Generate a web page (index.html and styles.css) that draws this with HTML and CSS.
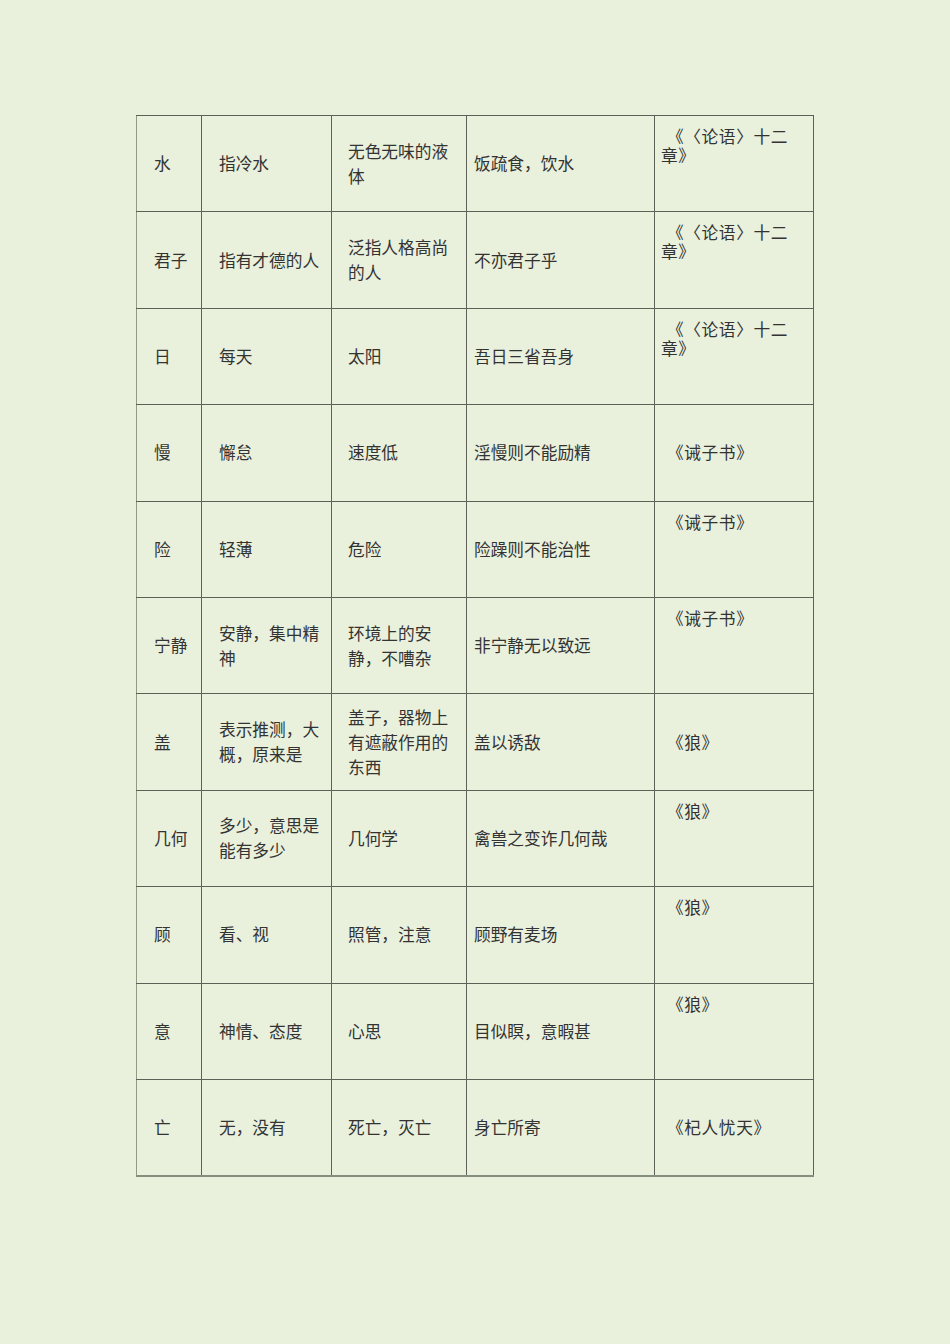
FILE: index.html
```html
<!DOCTYPE html>
<html lang="zh">
<head>
<meta charset="utf-8">
<title>文言词语</title>
<link rel="stylesheet" href="styles.css">
</head>
<body>
<table class="vocab">
  <colgroup>
    <col class="c1"><col class="c2"><col class="c3"><col class="c4"><col class="c5">
  </colgroup>
  <tbody>
    <tr><td class="word">水</td><td class="old">指冷水</td><td class="now">无色无味的液体</td><td class="ex">饭疏食，饮水</td><td class="src top">《〈论语〉十二章》</td></tr>
    <tr><td class="word">君子</td><td class="old">指有才德的人</td><td class="now">泛指人格高尚的人</td><td class="ex">不亦君子乎</td><td class="src top">《〈论语〉十二章》</td></tr>
    <tr><td class="word">日</td><td class="old">每天</td><td class="now">太阳</td><td class="ex">吾日三省吾身</td><td class="src top">《〈论语〉十二章》</td></tr>
    <tr><td class="word">慢</td><td class="old">懈怠</td><td class="now">速度低</td><td class="ex">淫慢则不能励精</td><td class="src mid">《诫子书》</td></tr>
    <tr><td class="word">险</td><td class="old">轻薄</td><td class="now">危险</td><td class="ex">险躁则不能治性</td><td class="src top">《诫子书》</td></tr>
    <tr><td class="word">宁静</td><td class="old">安静，集中精神</td><td class="now">环境上的安静，不嘈杂</td><td class="ex">非宁静无以致远</td><td class="src top">《诫子书》</td></tr>
    <tr><td class="word">盖</td><td class="old">表示推测，大概，原来是</td><td class="now">盖子，器物上有遮蔽作用的东西</td><td class="ex">盖以诱敌</td><td class="src mid">《狼》</td></tr>
    <tr><td class="word">几何</td><td class="old">多少，意思是能有多少</td><td class="now">几何学</td><td class="ex">禽兽之变诈几何哉</td><td class="src top">《狼》</td></tr>
    <tr><td class="word">顾</td><td class="old">看、视</td><td class="now">照管，注意</td><td class="ex">顾野有麦场</td><td class="src top">《狼》</td></tr>
    <tr><td class="word">意</td><td class="old">神情、态度</td><td class="now">心思</td><td class="ex">目似瞑，意暇甚</td><td class="src top">《狼》</td></tr>
    <tr><td class="word">亡</td><td class="old">无，没有</td><td class="now">死亡，灭亡</td><td class="ex">身亡所寄</td><td class="src mid">《杞人忧天》</td></tr>
  </tbody>
</table>
</body>
</html>
```

FILE: styles.css
```css
html, body {
  margin: 0;
  padding: 0;
  background: #e9f0dc;
}

body {
  min-height: 1344px;
  padding-top: 115px;
  padding-left: 136px;
  box-sizing: border-box;
  font-family: "Noto Sans CJK SC", "Noto Sans", sans-serif;
  color: #333;
  text-spacing-trim: space-all;
}

.vocab {
  border-collapse: collapse;
  table-layout: fixed;
  width: 677px;
  border-top: 1px solid #5d6158;
  border-right: 1px solid #5d6158;
  border-left: 1px solid #8f9a88;
  border-bottom: 2px solid #858f7f;
}

.c1 { width: 65px; }
.c2 { width: 130px; }
.c3 { width: 135px; }
.c4 { width: 188px; }
.c5 { width: 159px; }

.vocab tr {
  height: 96.4px;
}

.vocab td {
  border: 1px solid #5d6158;
  font-size: 16.7px;
  line-height: 25px;
  vertical-align: middle;
  padding: 0;
  text-spacing-trim: space-all;
}

.vocab td.word {
  padding-left: 17px;
  border-left: 1px solid #8f9a88;
}

.vocab td.old {
  padding-left: 17px;
  padding-right: 6px;
}

.vocab td.now {
  padding-left: 16px;
  padding-right: 10px;
}

.vocab td.ex {
  padding-left: 7px;
  padding-right: 6px;
}

.vocab td.src {
  padding-left: 6px;
  padding-right: 18px;
  line-height: 19px;
  text-indent: 6px;
  letter-spacing: 0.6px;
}

.vocab td.src.top {
  vertical-align: top;
  padding-top: 11px;
}

.vocab tr:last-child td {
  border-bottom: 2px solid #858f7f;
}
```
